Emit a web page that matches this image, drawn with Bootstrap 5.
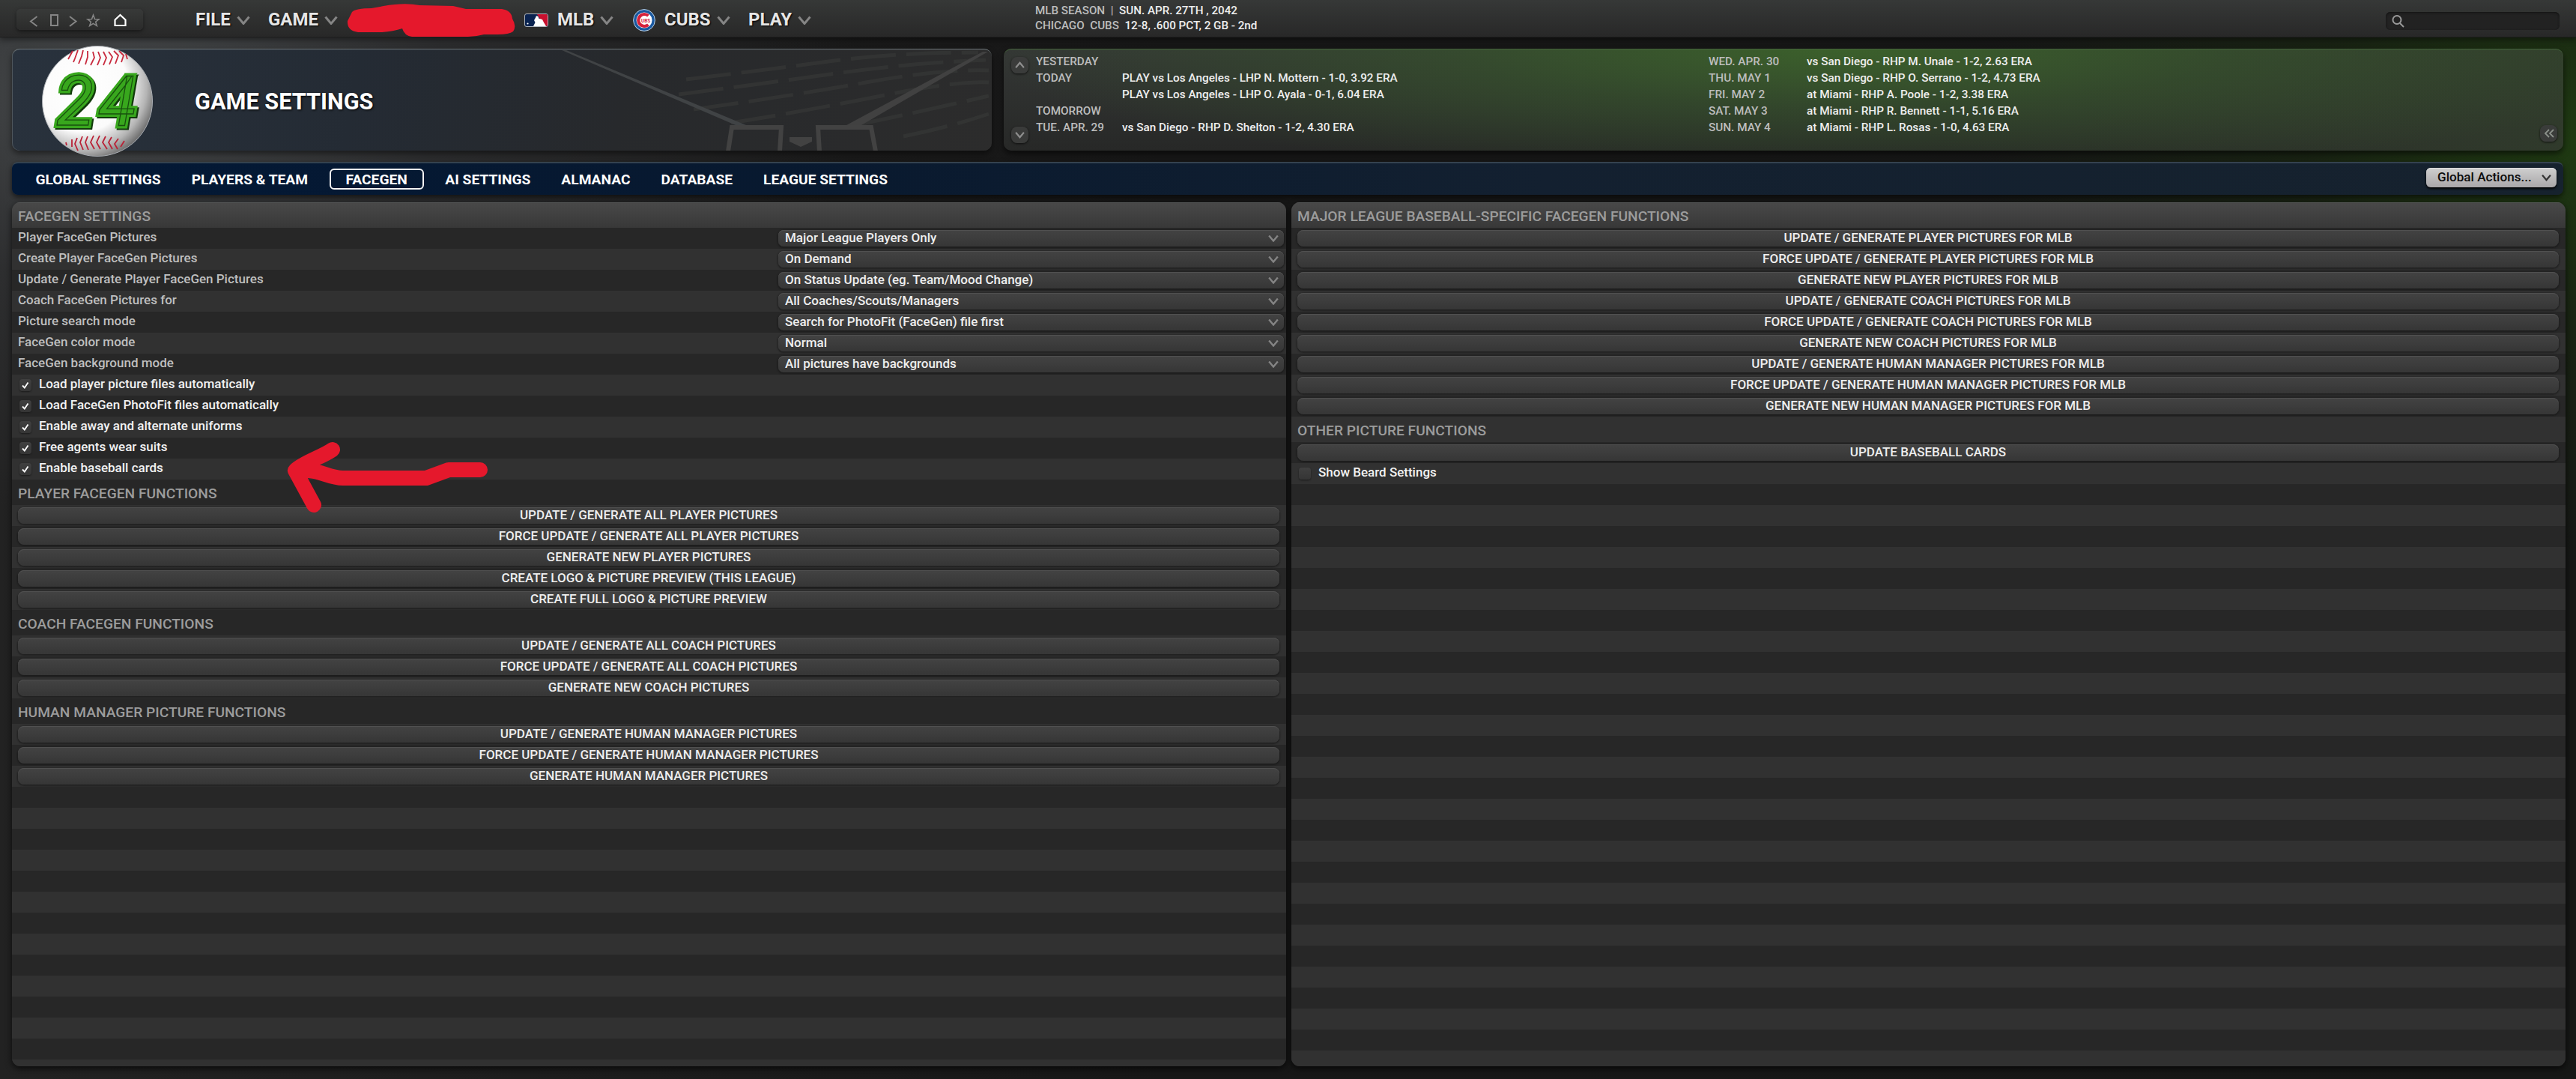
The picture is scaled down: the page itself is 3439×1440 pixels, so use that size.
<!DOCTYPE html>
<html lang="en">
  <head>
    <meta charset="UTF-8" />
    <meta name="viewport" content="width=device-width, initial-scale=1.0" />
    <title>Game Settings</title>
    <link rel="stylesheet" href="https://cdn.jsdelivr.net/npm/bootstrap@5.3.0/dist/css/bootstrap.min.css" />
    <script src="https://cdn.jsdelivr.net/npm/bootstrap@5.3.0/dist/js/bootstrap.bundle.min.js"></script>
    <style>
      body {
        height: 1440px;
        font-family: Roboto, "Liberation Sans", sans-serif;
        font-size: 17px;
        font-weight: 500;
        color: #eee;
        background:
          radial-gradient(ellipse 1000px 560px at 150px 120px, #46494b 0%, rgba(50, 51, 53, 0.7) 45%, rgba(24, 24, 24, 0) 100%),
          radial-gradient(ellipse 800px 560px at 3439px 190px, #1f3a12 0%, rgba(26, 40, 18, 0.7) 45%, rgba(24, 24, 24, 0) 100%),
          linear-gradient(90deg, #222, #171717 45%, #161716);
      }
      svg { display: block; flex: none; }

      /* top bar */
      .topbar {
        height: 50px;
        background: linear-gradient(#363837, #282828);
        border-bottom: 1px solid #1d1d1d;
        box-shadow: 0 3px 8px rgba(0, 0, 0, 0.45);
      }
      .nav-tools {
        width: 169px;
        height: 28px;
        margin: 12px 0 0 22px;
        border-radius: 6px;
        background: linear-gradient(#383a39, #2b2b2b);
        box-shadow: 0 2px 5px rgba(0, 0, 0, 0.5), 0 0 1px #555;
      }
      .menu {
        display: grid;
        grid-template-columns: 97px 342px 145px 154px 100px;
        margin-left: 70px;
        font-size: 24px;
        font-weight: 700;
        line-height: 53px;
        color: #e6e6e6;
        text-shadow: 1px 1px 2px #000;
      }
      .menu-item { gap: 8px; }
      .status-line { margin-left: 283px; padding-top: 4px; font-size: 15.2px; line-height: 20px; white-space: pre; }
      .dim { color: #bdbdbd; }
      .searchbox {
        width: 232px;
        height: 24px;
        margin: 16px 22px 0 0;
        border-radius: 6px;
        background: #222;
        box-shadow: inset 0 1px 3px #111;
      }

      /* banner and schedule */
      .top-panels { margin: 15px 17px 0 16px; height: 136px; gap: 16px; }
      .banner {
        width: 1308px;
        border-radius: 10px;
        border-top: 1px solid #6f777b;
        background: linear-gradient(100deg, #29323d 0%, #242b34 35%, #27292c 62%, #2c2c2c 100%);
        box-shadow: inset 1px 0 0 #4e565c, 0 4px 9px rgba(0, 0, 0, 0.5);
      }
      .ball { position: absolute; left: 40px; top: -6px; }
      .field-art { position: absolute; left: 0; top: 0; }
      .banner-title { padding-left: 244px; padding-top: 6px; font-size: 30.7px; font-weight: 700; color: #fff; text-shadow: 1px 1px 3px #000; }
      .schedule {
        border-radius: 10px;
        border-top: 1px solid #45663c;
        background:
          radial-gradient(ellipse 1150px 170px at 1120px 0, #3b602b 0%, rgba(54, 86, 42, 0.6) 45%, rgba(44, 50, 42, 0) 100%),
          linear-gradient(90deg, rgba(60, 80, 50, 0) 60%, rgba(49, 60, 44, 0.9)),
          linear-gradient(#343735, #272827);
        box-shadow: 0 4px 9px rgba(0, 0, 0, 0.6);
        font-size: 15.3px;
      }
      .sched-scroll { width: 43px; padding: 10px 0 10px 10px; }
      .sched-list {
        display: grid;
        grid-template-columns: 115px 783px 131px 1fr;
        grid-template-rows: repeat(5, 22px);
        padding-top: 5px;
        line-height: 22px;
      }
      .round-btn {
        width: 23px;
        height: 22px;
        border-radius: 8px;
        background: rgba(60, 61, 60, 0.9);
        box-shadow: 0 1px 3px rgba(0, 0, 0, 0.7);
      }

      /* tab bar */
      .tabbar {
        height: 44px;
        margin: 15px 17px 0 16px;
        padding-left: 11px;
        border-radius: 8px;
        border-top: 2px solid #34424f;
        background: linear-gradient(90deg, #021836 0%, #08192f 30%, #132030 60%, #16222e 100%);
        box-shadow: 0 3px 7px rgba(0, 0, 0, 0.6);
        font-size: 19.2px;
        font-weight: 700;
        color: #fff;
      }
      .tab { padding: 2px 20.5px 0; }
      .tab-active {
        height: 28px;
        margin: 0 8px;
        padding: 0 20px;
        border: 2px solid #f4f4f4;
        border-radius: 6px;
        line-height: 26px;
      }
      .global-actions {
        width: 174px;
        height: 26px;
        margin: -5px 9px 0 0;
        padding: 0 7px 0 15px;
        border-radius: 6px;
        background: linear-gradient(#cfcfcf, #a9a7a9);
        box-shadow: 0 2px 3px #000, inset 0 1px 0 #ddd;
        color: #0c0c0c;
        font-size: 17.1px;
        font-weight: 500;
      }

      /* settings panels */
      .panels { margin: 10px 14px 0 16px; height: 1153px; gap: 7px; }
      .settings-panel {
        flex: 1 1 0;
        border-radius: 11px;
        overflow: hidden;
        box-shadow: 0 3px 8px rgba(0, 0, 0, 0.7);
      }
      .panel-title {
        height: 34px;
        padding-left: 8px;
        background: linear-gradient(#494949, #383838);
        box-shadow: inset 0 1px 0 #555757;
      }
      .panel-title, .subhead { color: #9c9c9c; font-size: 19.2px; line-height: 37px; }
      .rows > div { height: 28px; padding: 0 9px 0 8px; }
      .rows > div:nth-child(odd) { background-color: #272727; }
      .rows > div:nth-child(even) { background-color: #313131; }
      .rows > .subhead { height: 34px; }
      .rows > .setting { padding-right: 3px; line-height: 25px; color: #bfbfbf; }
      .rows > .filler {
        height: auto;
        flex: 1;
        background: repeating-linear-gradient(#272727 0 28px, #313131 28px 56px);
      }
      .raised {
        height: 22px;
        background: linear-gradient(#434343, #363636);
        box-shadow: inset 0 1px 0 #505050, 0 1px 2px 1px rgba(20, 20, 20, 0.55);
        color: #eee;
        line-height: 21px;
      }
      .pick { width: 675px; margin-top: 3px; padding: 0 7px 0 9px; border-radius: 7px; }
      .pick-text { margin-top: -2px; }
      .wide-btn { margin-top: 3px; border-radius: 8px; text-align: center; }
      .tick {
        width: 16px;
        height: 16px;
        margin: 0 10px 0 2px;
        border-radius: 4px;
        background: linear-gradient(#404040, #353535);
        box-shadow: 0 1px 2px #1a1a1a;
      }
      .option { color: #f2f2f2; }
      .option-text { margin-top: -3px; }

      /* hand-drawn marker over the page */
      .marker { position: absolute; left: 0; top: 0; pointer-events: none; }
    </style>
  </head>
  <body class="d-flex flex-column overflow-hidden position-relative">
    <svg width="0" height="0" class="position-absolute">
      <defs>
        <symbol id="chev" viewBox="0 0 18 12"><path d="M1.500 1.500 9 10.500 16.500 1.500" fill="none" stroke="currentColor" stroke-width="3" /></symbol>
        <symbol id="check" viewBox="0 0 16 16"><path d="M4 8.500 6.800 11.500 11.500 4.500" fill="none" stroke="#fff" stroke-width="1.900" /></symbol>
      </defs>
    </svg>

    <header class="topbar d-flex align-items-start flex-shrink-0">
      <div class="nav-tools">
        <svg width="169" height="28" fill="none" stroke="#858585" stroke-width="2">
          <path d="M27.500 10 19 16.500 27.500 23" />
          <rect x="46" y="8" width="9" height="14" />
          <path d="M71 10 79.500 16.500 71 23" />
          <path d="M102.500 8 104.500 13.500 110 13.700 105.700 17.200 107.300 22.500 102.500 19.400 97.700 22.500 99.300 17.200 95 13.700 100.500 13.500Z" stroke-width="1.600" />
          <path d="M131.500 14.500 138.500 8 145.500 14.500V22H131.500Z" stroke="#fff" stroke-width="2.200" />
        </svg>
      </div>
      <nav class="menu">
        <div class="menu-item d-flex align-items-center">FILE <svg width="18" height="12" color="#858585"><use href="#chev" /></svg></div>
        <div class="menu-item d-flex align-items-center">GAME <svg width="18" height="12" color="#858585"><use href="#chev" /></svg></div>
        <div class="menu-item d-flex align-items-center">
          <svg class="me-1" width="32" height="18" viewBox="0 0 32 18">
            <rect x=".5" y=".5" width="31" height="17" rx="2.500" fill="#0a2350" stroke="#aeb4bd" />
            <path d="M17 1H29Q31 1 31 3V15Q31 17 29 17H27Z" fill="#c8102e" />
            <path d="M12 17 14.500 12 13 9 15 5.500Q15.500 2.500 17.500 3.500Q19.500 4 19 6.500L24 8 26 12 29 17Z" fill="#fff" />
            <circle cx="4.500" cy="13.500" r="1.100" fill="#fff" />
          </svg>MLB <svg width="18" height="12" color="#858585"><use href="#chev" /></svg>
        </div>
        <div class="menu-item d-flex align-items-center">
          <svg class="me-1" width="30" height="30" viewBox="0 0 30 30">
            <circle cx="15" cy="15" r="14.400" fill="#1a59a0" stroke="#bcd3e8" stroke-width="1" />
            <circle cx="15" cy="15" r="10.500" fill="#fff" />
            <path d="M20.500 9A8 8 0 1 0 20.500 21" fill="none" stroke="#d5213b" stroke-width="4.200" />
            <text x="11" y="17.800" font-size="7.500" font-weight="700" fill="#d5213b" textLength="12" lengthAdjust="spacingAndGlyphs" style="text-shadow: none">UBS</text>
          </svg>CUBS <svg width="18" height="12" color="#858585"><use href="#chev" /></svg>
        </div>
        <div class="menu-item d-flex align-items-center">PLAY <svg width="18" height="12" color="#858585"><use href="#chev" /></svg></div>
      </nav>
      <div class="status-line"><div><span class="dim">MLB SEASON  |  </span>SUN. APR. 27TH , 2042</div><div><span class="dim">CHICAGO  CUBS  </span>12-8, .600 PCT, 2 GB - 2nd</div></div>
      <div class="searchbox ms-auto">
        <svg width="30" height="24" fill="none" stroke="#9a9a9a" stroke-width="2"><circle cx="15" cy="10.500" r="5.500" /><path d="M19 15 24 20" /></svg>
      </div>
    </header>

    <section class="top-panels d-flex flex-shrink-0">
      <div class="banner position-relative d-flex align-items-center">
        <svg class="field-art" width="1308" height="135">
          <g fill="none" stroke="#363736" stroke-width="5" opacity=".7">
            <path d="M900 40Q1000 28 1090 16T1290 4M890 60Q1000 46 1100 32T1300 14M910 80Q1040 62 1140 44T1304 28M960 98Q1060 82 1160 62T1304 44M1130 100Q1200 86 1304 62M1190 116Q1250 104 1304 86" stroke-dasharray="60 14" />
          </g>
          <path d="M734 1 740 1 980 101 966 101Z" fill="#404345" />
          <path d="M1296 3 1303 3 1134 101 1114 101Z" fill="#414141" />
          <path d="M956 136 961 104H1027L1025 136M1078 136 1076 104H1147L1153 136" fill="none" stroke="#424242" stroke-width="6" />
          <path d="M1038 117H1068V123L1053 130 1038 123Z" fill="#424242" />
        </svg>
        <svg class="ball" width="148" height="150" viewBox="0 0 148 150">
          <defs>
            <radialGradient id="ballShade" cx=".36" cy=".36" r=".72">
              <stop offset="0" stop-color="#fff" />
              <stop offset=".58" stop-color="#fbfbfb" />
              <stop offset=".82" stop-color="#b4b4b4" />
              <stop offset="1" stop-color="#5d5d5d" />
            </radialGradient>
          </defs>
          <circle cx="74" cy="75" r="73.500" fill="url(#ballShade)" stroke="#a9adb2" stroke-width="1" />
          <path d="M41 9 35 20M48 8 44 19 42 24M55 8 53 16 49 26M61 9V17L58 27M68 10 70 18 65 28M75 10 78 18 74 28M82 10 86 18 82 28M89 10 94 17 90 27M96 9 102 15 98 26M103 9 109 15 106 24M112 13 114 20" fill="none" stroke="#c8293d" stroke-width="1.800" transform="translate(0 -1)" />
          <path d="M32 130 33 134M40 126V136M47 124 44 132 48 141M54 122 51 130 55 140M61 122 58 130 62 140M69 121 65 130 70 139M77 121 73 130 78 139M85 122 81 130 87 139M93 123 89 130 94 139M102 125 97 132 101 139M110 128 105 136" fill="none" stroke="#b92237" stroke-width="1.800" />
          <g font-family="Roboto, 'Liberation Sans', sans-serif" font-style="italic" font-size="92" font-weight="400" stroke-linejoin="miter">
            <text x="21" y="109" textLength="107" fill="#123b0c" stroke="#123b0c" stroke-width="8">24</text>
            <text x="19" y="107" textLength="107" fill="#38a71d" stroke="#38a71d" stroke-width="8">24</text>
            <text x="19" y="107" textLength="107" fill="none" stroke="#17500e" stroke-width="1.300">24</text>
          </g>
        </svg>
        <div class="banner-title">GAME SETTINGS</div>
      </div>
      <div class="schedule flex-grow-1 d-flex">
        <div class="sched-scroll d-flex flex-column justify-content-between">
          <div class="round-btn d-flex align-items-center justify-content-center"><svg width="13" height="10" color="#8e8e8e"><use href="#chev" transform="rotate(180 6.500 5)" /></svg></div>
          <div class="round-btn d-flex align-items-center justify-content-center"><svg width="13" height="10" color="#8e8e8e"><use href="#chev" /></svg></div>
        </div>
        <div class="sched-list flex-grow-1">
          <div class="dim">YESTERDAY</div><div></div>
          <div class="dim">WED. APR. 30</div><div>vs San Diego - RHP M. Unale - 1-2, 2.63 ERA</div>
          <div class="dim">TODAY</div><div>PLAY vs Los Angeles - LHP N. Mottern - 1-0, 3.92 ERA</div>
          <div class="dim">THU. MAY 1</div><div>vs San Diego - RHP O. Serrano - 1-2, 4.73 ERA</div>
          <div></div><div>PLAY vs Los Angeles - LHP O. Ayala - 0-1, 6.04 ERA</div>
          <div class="dim">FRI. MAY 2</div><div>at Miami - RHP A. Poole - 1-2, 3.38 ERA</div>
          <div class="dim">TOMORROW</div><div></div>
          <div class="dim">SAT. MAY 3</div><div>at Miami - RHP R. Bennett - 1-1, 5.16 ERA</div>
          <div class="dim">TUE. APR. 29</div><div>vs San Diego - RHP D. Shelton - 1-2, 4.30 ERA</div>
          <div class="dim">SUN. MAY 4</div><div>at Miami - RHP L. Rosas - 1-0, 4.63 ERA</div>
        </div>
        <div class="d-flex align-items-end pe-2 pb-2">
          <div class="round-btn d-flex align-items-center justify-content-center mb-1"><svg width="14" height="12" fill="none" stroke="#8b918a" stroke-width="1.800"><path d="M7 1 2 6 7 11M13 1 8 6 13 11" /></svg></div>
        </div>
      </div>
    </section>

    <nav class="tabbar d-flex align-items-center flex-shrink-0">
      <div class="tab">GLOBAL SETTINGS</div>
      <div class="tab">PLAYERS &amp; TEAM</div>
      <div class="tab-active">FACEGEN</div>
      <div class="tab">AI SETTINGS</div>
      <div class="tab">ALMANAC</div>
      <div class="tab">DATABASE</div>
      <div class="tab">LEAGUE SETTINGS</div>
      <div class="global-actions ms-auto d-flex align-items-center justify-content-between">Global Actions... <svg width="13" height="10" color="#333"><use href="#chev" /></svg></div>
    </nav>

    <main class="panels d-flex flex-shrink-0">
      <section class="settings-panel d-flex flex-column">
        <div class="panel-title">FACEGEN SETTINGS</div>
        <div class="rows d-flex flex-column flex-grow-1">
          <div class="setting d-flex justify-content-between">Player FaceGen Pictures<div class="pick raised d-flex align-items-center justify-content-between"><span class="pick-text">Major League Players Only</span><svg width="14" height="10" color="#858585"><use href="#chev" /></svg></div></div>
          <div class="setting d-flex justify-content-between">Create Player FaceGen Pictures<div class="pick raised d-flex align-items-center justify-content-between"><span class="pick-text">On Demand</span><svg width="14" height="10" color="#858585"><use href="#chev" /></svg></div></div>
          <div class="setting d-flex justify-content-between">Update / Generate Player FaceGen Pictures<div class="pick raised d-flex align-items-center justify-content-between"><span class="pick-text">On Status Update (eg. Team/Mood Change)</span><svg width="14" height="10" color="#858585"><use href="#chev" /></svg></div></div>
          <div class="setting d-flex justify-content-between">Coach FaceGen Pictures for<div class="pick raised d-flex align-items-center justify-content-between"><span class="pick-text">All Coaches/Scouts/Managers</span><svg width="14" height="10" color="#858585"><use href="#chev" /></svg></div></div>
          <div class="setting d-flex justify-content-between">Picture search mode<div class="pick raised d-flex align-items-center justify-content-between"><span class="pick-text">Search for PhotoFit (FaceGen) file first</span><svg width="14" height="10" color="#858585"><use href="#chev" /></svg></div></div>
          <div class="setting d-flex justify-content-between">FaceGen color mode<div class="pick raised d-flex align-items-center justify-content-between"><span class="pick-text">Normal</span><svg width="14" height="10" color="#858585"><use href="#chev" /></svg></div></div>
          <div class="setting d-flex justify-content-between">FaceGen background mode<div class="pick raised d-flex align-items-center justify-content-between"><span class="pick-text">All pictures have backgrounds</span><svg width="14" height="10" color="#858585"><use href="#chev" /></svg></div></div>
          <div class="option d-flex align-items-center"><div class="tick"><svg width="16" height="16"><use href="#check" /></svg></div><span class="option-text">Load player picture files automatically</span></div>
          <div class="option d-flex align-items-center"><div class="tick"><svg width="16" height="16"><use href="#check" /></svg></div><span class="option-text">Load FaceGen PhotoFit files automatically</span></div>
          <div class="option d-flex align-items-center"><div class="tick"><svg width="16" height="16"><use href="#check" /></svg></div><span class="option-text">Enable away and alternate uniforms</span></div>
          <div class="option d-flex align-items-center"><div class="tick"><svg width="16" height="16"><use href="#check" /></svg></div><span class="option-text">Free agents wear suits</span></div>
          <div class="option d-flex align-items-center"><div class="tick"><svg width="16" height="16"><use href="#check" /></svg></div><span class="option-text">Enable baseball cards</span></div>
          <div class="subhead">PLAYER FACEGEN FUNCTIONS</div>
          <div class="d-grid"><div class="wide-btn raised">UPDATE / GENERATE ALL PLAYER PICTURES</div></div>
          <div class="d-grid"><div class="wide-btn raised">FORCE UPDATE / GENERATE ALL PLAYER PICTURES</div></div>
          <div class="d-grid"><div class="wide-btn raised">GENERATE NEW PLAYER PICTURES</div></div>
          <div class="d-grid"><div class="wide-btn raised">CREATE LOGO &amp; PICTURE PREVIEW (THIS LEAGUE)</div></div>
          <div class="d-grid"><div class="wide-btn raised">CREATE FULL LOGO &amp; PICTURE PREVIEW</div></div>
          <div class="subhead">COACH FACEGEN FUNCTIONS</div>
          <div class="d-grid"><div class="wide-btn raised">UPDATE / GENERATE ALL COACH PICTURES</div></div>
          <div class="d-grid"><div class="wide-btn raised">FORCE UPDATE / GENERATE ALL COACH PICTURES</div></div>
          <div class="d-grid"><div class="wide-btn raised">GENERATE NEW COACH PICTURES</div></div>
          <div class="subhead">HUMAN MANAGER PICTURE FUNCTIONS</div>
          <div class="d-grid"><div class="wide-btn raised">UPDATE / GENERATE HUMAN MANAGER PICTURES</div></div>
          <div class="d-grid"><div class="wide-btn raised">FORCE UPDATE / GENERATE HUMAN MANAGER PICTURES</div></div>
          <div class="d-grid"><div class="wide-btn raised">GENERATE HUMAN MANAGER PICTURES</div></div>
          <div class="filler"></div>
        </div>
      </section>

      <section class="settings-panel d-flex flex-column">
        <div class="panel-title">MAJOR LEAGUE BASEBALL-SPECIFIC FACEGEN FUNCTIONS</div>
        <div class="rows d-flex flex-column flex-grow-1">
          <div class="d-grid"><div class="wide-btn raised">UPDATE / GENERATE PLAYER PICTURES FOR MLB</div></div>
          <div class="d-grid"><div class="wide-btn raised">FORCE UPDATE / GENERATE PLAYER PICTURES FOR MLB</div></div>
          <div class="d-grid"><div class="wide-btn raised">GENERATE NEW PLAYER PICTURES FOR MLB</div></div>
          <div class="d-grid"><div class="wide-btn raised">UPDATE / GENERATE COACH PICTURES FOR MLB</div></div>
          <div class="d-grid"><div class="wide-btn raised">FORCE UPDATE / GENERATE COACH PICTURES FOR MLB</div></div>
          <div class="d-grid"><div class="wide-btn raised">GENERATE NEW COACH PICTURES FOR MLB</div></div>
          <div class="d-grid"><div class="wide-btn raised">UPDATE / GENERATE HUMAN MANAGER PICTURES FOR MLB</div></div>
          <div class="d-grid"><div class="wide-btn raised">FORCE UPDATE / GENERATE HUMAN MANAGER PICTURES FOR MLB</div></div>
          <div class="d-grid"><div class="wide-btn raised">GENERATE NEW HUMAN MANAGER PICTURES FOR MLB</div></div>
          <div class="subhead">OTHER PICTURE FUNCTIONS</div>
          <div class="d-grid"><div class="wide-btn raised">UPDATE BASEBALL CARDS</div></div>
          <div class="option d-flex align-items-center"><div class="tick"></div><span class="option-text">Show Beard Settings</span></div>
          <div class="filler"></div>
        </div>
      </section>
    </main>

    <svg class="marker" width="700" height="700">
      <path d="M470 16Q475 11 496 11L512 8Q540 3 560 7L605 8 622 12H670Q683 14 684 25 690 35 685 42 680 46 664 46H646Q635 49 625 49H550Q540 48 537 38 525 42 510 43H478Q463 41 464 28Z" fill="#e5182c" />
      <path d="M641 627H599L569 638H458C440 638 430 629 412 628L394 628M444 600C430 610 405 617 394 628L419 674" fill="none" stroke="#e5182c" stroke-width="20" stroke-linecap="round" stroke-linejoin="round" />
    </svg>
  </body>
</html>
